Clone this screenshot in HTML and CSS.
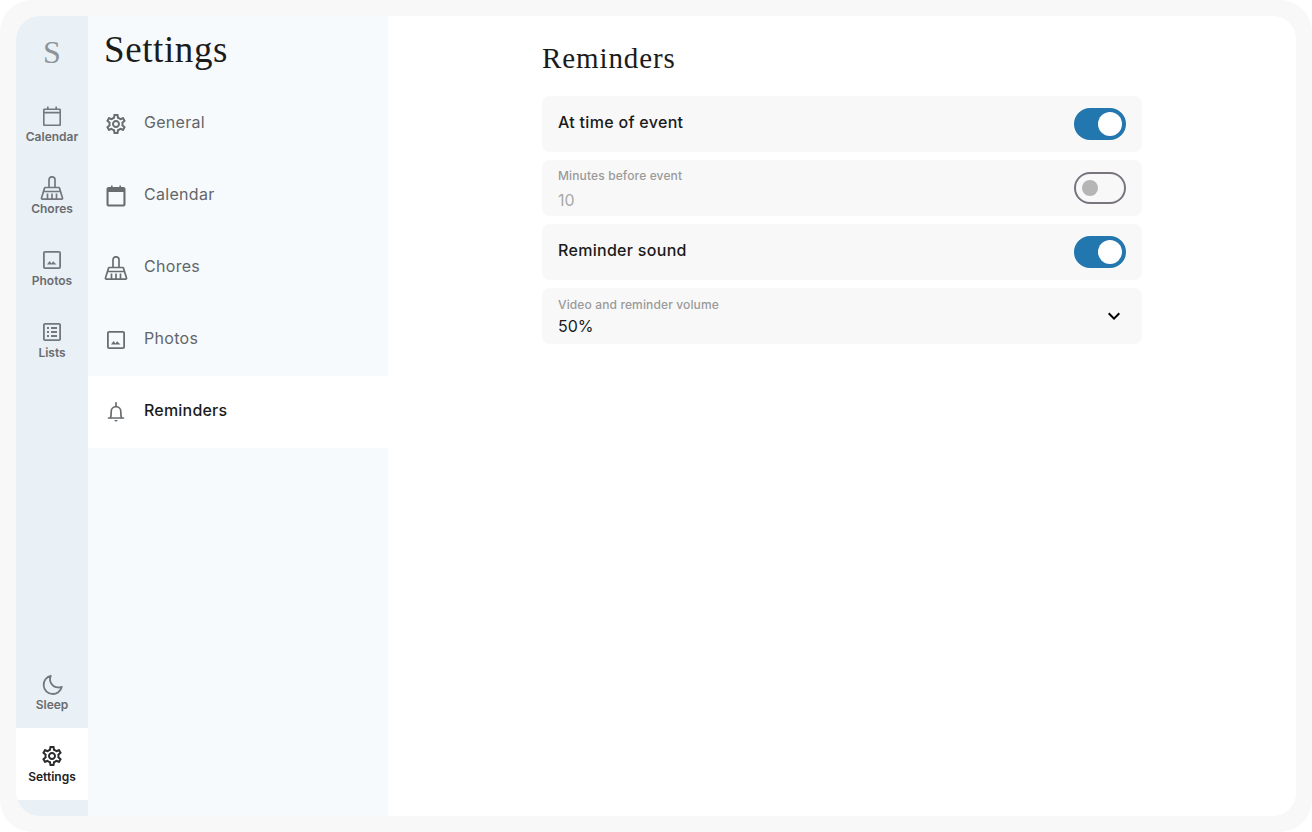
FILE: index.html
```html
<!DOCTYPE html>
<html lang="en">

<head>
    <meta charset="UTF-8">
    <title>Settings</title>
    <link rel="stylesheet" href="styles.css">
</head>

<body>
    <svg class="icon-defs" width="0" height="0">
        <symbol id="i-gear" viewBox="0 0 24 24">
            <path fill="currentColor" d="M19.43 12.98c.04-.32.07-.64.07-.98 0-.34-.03-.66-.07-.98l2.11-1.65c.19-.15.24-.42.12-.64l-2-3.46c-.09-.16-.26-.25-.44-.25-.06 0-.12.01-.17.03l-2.49 1c-.52-.4-1.08-.73-1.69-.98l-.38-2.65C14.46 2.18 14.25 2 14 2h-4c-.25 0-.46.18-.49.42l-.38 2.65c-.61.25-1.17.59-1.69.98l-2.49-1c-.06-.02-.12-.03-.18-.03-.17 0-.34.09-.43.25l-2 3.46c-.13.22-.07.49.12.64l2.11 1.65c-.04.32-.07.65-.07.98 0 .33.03.66.07.98l-2.11 1.65c-.19.15-.24.42-.12.64l2 3.46c.09.16.26.25.44.25.06 0 .12-.01.17-.03l2.49-1c.52.4 1.08.73 1.69.98l.38 2.65c.03.24.24.42.49.42h4c.25 0 .46-.18.49-.42l.38-2.65c.61-.25 1.17-.59 1.69-.98l2.49 1c.06.02.12.03.18.03.17 0 .34-.09.43-.25l2-3.46c.12-.22.07-.49-.12-.64l-2.11-1.65zm-1.98-1.71c.04.31.05.52.05.73 0 .21-.02.43-.05.73l-.14 1.13.89.7 1.08.84-.7 1.21-1.27-.51-1.04-.42-.9.68c-.43.32-.84.56-1.25.73l-1.06.43-.16 1.13-.2 1.35h-1.4l-.19-1.35-.16-1.13-1.06-.43c-.43-.18-.83-.41-1.23-.71l-.91-.7-1.06.43-1.27.51-.7-1.21 1.08-.84.89-.7-.14-1.13c-.03-.31-.05-.54-.05-.74s.02-.43.05-.73l.14-1.13-.89-.7-1.08-.84.7-1.21 1.27.51 1.04.42.9-.68c.43-.32.84-.56 1.25-.73l1.06-.43.16-1.13.2-1.35h1.39l.19 1.35.16 1.13 1.06.43c.43.18.83.41 1.23.71l.91.7 1.06-.43 1.27-.51.7 1.21-1.07.85-.89.7.14 1.13zM12 8c-2.21 0-4 1.79-4 4s1.79 4 4 4 4-1.79 4-4-1.79-4-4-4zm0 6c-1.1 0-2-.9-2-2s.9-2 2-2 2 .9 2 2-.9 2-2 2z" />
        </symbol>
        <symbol id="i-calendar" viewBox="0 0 24 24">
            <path fill="none" stroke="currentColor" stroke-width="1.6" d="M4.300 5.300h15.400a.5.5 0 0 1 .5.5v15a.5.5 0 0 1-.5.5H4.300a.5.5 0 0 1-.5-.5v-15a.5.5 0 0 1 .5-.5zM3.800 8.600h16.400M7.800 2.500v3M16.200 2.500v3" />
        </symbol>
        <symbol id="i-calendar-full" viewBox="0 0 24 24">
            <path fill="currentColor" d="M7 1.500h1.600V3h6.800V1.500H17V3h2.500c1.100 0 2 .9 2 2v15.500c0 1.100-.9 2-2 2h-15c-1.100 0-2-.9-2-2V5c0-1.100.9-2 2-2H7zM4.600 8v12.400h14.800V8z" />
        </symbol>
        <symbol id="i-broom" viewBox="0 0 24 24">
            <path fill="none" stroke="currentColor" stroke-width="1.7" stroke-linejoin="round" d="M9 11.500V3.800a3 3 0 0 1 6 0v7.700M5.500 11.500h13c.5 0 .9.3 1 .8l3 9.700c.2.6-.2 1.100-.8 1.100H2.300c-.6 0-1-.5-.8-1.100l3-9.700c.1-.5.5-.8 1-.8zM4 15.500h16M7.500 17.500v5M12 17.500v5M16.500 17.500v5" />
        </symbol>
        <symbol id="i-photo" viewBox="0 0 24 24">
            <path fill="currentColor" d="M5 3h14c1.100 0 2 .9 2 2v14c0 1.100-.9 2-2 2H5c-1.100 0-2-.9-2-2V5c0-1.100.9-2 2-2zm0 1.800c-.1 0-.2.1-.2.2v14c0 .1.1.2.2.2h14c.1 0 .2-.1.2-.2V5c0-.1-.1-.2-.2-.2zM7 16.500l2.600-3.600 1.900 2.500 1.500-2.100 3.500 3.200z" />
        </symbol>
        <symbol id="i-list" viewBox="0 0 24 24">
            <path fill="currentColor" d="M5 3h14c1.100 0 2 .9 2 2v14c0 1.100-.9 2-2 2H5c-1.100 0-2-.9-2-2V5c0-1.100.9-2 2-2zm0 1.800c-.1 0-.2.1-.2.2v14c0 .1.1.2.2.2h14c.1 0 .2-.1.2-.2V5c0-.1-.1-.2-.2-.2zM7 7h2v2H7zm4 0h6v2h-6zm-4 4h2v2H7zm4 0h6v2h-6zm-4 4h2v2H7zm4 0h6v2h-6z" />
        </symbol>
        <symbol id="i-bell" viewBox="0 0 24 24">
            <path fill="none" stroke="currentColor" stroke-width="1.7" stroke-linecap="round" stroke-linejoin="round" d="M4.500 18h15M6.500 18c.6-1.500.7-3.500.7-6.500a4.800 4.800 0 0 1 9.600 0c0 3 .1 5 .7 6.500M12 6.500V2.800" />
            <path fill="currentColor" d="M10.400 20h3.200a1.600 1.600 0 0 1-3.200 0z" />
        </symbol>
        <symbol id="i-moon" viewBox="0 0 24 24">
            <path fill="none" stroke="currentColor" stroke-width="1.800" stroke-linejoin="round" d="M10.800 3.800a9.200 9.200 0 1 0 11 11c-1.200.6-2.500.8-3.900.6a8.200 8.200 0 0 1-7.100-11.600z" />
        </symbol>
    </svg>

    <div class="frame">
        <nav class="rail">
            <div class="rail-logo">S</div>
            <a class="rail-item">
                <svg class="rail-icon"><use href="#i-calendar" /></svg>
                <span>Calendar</span>
            </a>
            <a class="rail-item">
                <svg class="rail-icon"><use href="#i-broom" /></svg>
                <span>Chores</span>
            </a>
            <a class="rail-item">
                <svg class="rail-icon"><use href="#i-photo" /></svg>
                <span>Photos</span>
            </a>
            <a class="rail-item">
                <svg class="rail-icon"><use href="#i-list" /></svg>
                <span>Lists</span>
            </a>
            <div class="rail-bottom">
                <a class="rail-item">
                    <svg class="rail-icon"><use href="#i-moon" /></svg>
                    <span>Sleep</span>
                </a>
                <a class="rail-item active">
                    <svg class="rail-icon"><use href="#i-gear" /></svg>
                    <span>Settings</span>
                </a>
            </div>
        </nav>

        <aside class="side">
            <h1>Settings</h1>
            <a class="side-item">
                <svg class="side-icon"><use href="#i-gear" /></svg>
                <span>General</span>
            </a>
            <a class="side-item">
                <svg class="side-icon"><use href="#i-calendar-full" /></svg>
                <span>Calendar</span>
            </a>
            <a class="side-item">
                <svg class="side-icon"><use href="#i-broom" /></svg>
                <span>Chores</span>
            </a>
            <a class="side-item">
                <svg class="side-icon"><use href="#i-photo" /></svg>
                <span>Photos</span>
            </a>
            <a class="side-item active">
                <svg class="side-icon"><use href="#i-bell" /></svg>
                <span>Reminders</span>
            </a>
        </aside>

        <main class="main">
            <div class="content">
                <h2>Reminders</h2>
                <div class="row">
                    <span class="row-label">At time of event</span>
                    <div class="toggle on"></div>
                </div>
                <div class="row disabled">
                    <div class="row-text">
                        <span class="row-small">Minutes before event</span>
                        <span class="row-value">10</span>
                    </div>
                    <div class="toggle"></div>
                </div>
                <div class="row">
                    <span class="row-label">Reminder sound</span>
                    <div class="toggle on"></div>
                </div>
                <div class="row">
                    <div class="row-text">
                        <span class="row-small">Video and reminder volume</span>
                        <span class="row-value">50%</span>
                    </div>
                    <svg class="chevron" viewBox="0 0 24 24">
                        <path d="M7.400 8.600 12 13.200l4.600-4.600L18 10l-6 6-6-6z" />
                    </svg>
                </div>
            </div>
        </main>
    </div>
</body>

</html>
```

FILE: styles.css
```css
* {
    box-sizing: border-box;
}

html {
    background-color: #ffffff;
}

body {
    margin: 0;
    height: 832px;
    padding: 16px;
    overflow: hidden;
    font-family: Inter, "Noto Sans", sans-serif;
    background-color: #f8f8f8;
    border-radius: 32px;
}

.icon-defs {
    position: absolute;
}

.frame {
    display: flex;
    height: 800px;
    border-radius: 24px;
    overflow: hidden;
    background-color: #ffffff;
}

/* left rail */
.rail {
    display: flex;
    flex-direction: column;
    flex: none;
    width: 72px;
    padding-bottom: 16px;
    background-color: #e9f0f6;
}

.rail-logo {
    display: flex;
    align-items: center;
    justify-content: center;
    height: 72px;
    font-family: "Liberation Serif", serif;
    font-size: 32px;
    color: #8e9397;
}

.rail-item {
    display: flex;
    flex-direction: column;
    align-items: center;
    height: 72px;
    padding-top: 16px;
    font-size: 12px;
    font-weight: 600;
    line-height: 14px;
    color: #696c70;
}

.rail-item.active {
    background-color: #ffffff;
    color: #1f2123;
}

.rail-icon {
    width: 24px;
    height: 24px;
    margin-bottom: 2px;
    color: #74787c;
}

.rail-item.active .rail-icon {
    color: #2a2c2e;
}

.rail-bottom {
    margin-top: auto;
}

/* settings list */
.side {
    flex: none;
    width: 300px;
    background-color: #f6fafd;
}

.side h1 {
    margin: 0;
    height: 72px;
    padding: 13px 0 0 16px;
    font-family: "Liberation Serif", serif;
    font-size: 37px;
    font-weight: 400;
    line-height: 42px;
    letter-spacing: 0.6px;
    color: #1b1b1b;
}

.side-item {
    display: flex;
    align-items: center;
    height: 72px;
    padding-left: 16px;
    font-size: 16px;
    font-weight: 400;
    letter-spacing: 0.3px;
    color: #636669;
}

.side-item span {
    margin-bottom: 4px;
}

.side-item.active {
    background-color: #ffffff;
    font-weight: 500;
    letter-spacing: 0.2px;
    color: #1b1b1b;
}

.side-icon {
    flex: none;
    width: 24px;
    height: 24px;
    margin-right: 16px;
    color: #6a6d70;
}

/* main content */
.main {
    flex: 1;
    display: flex;
    justify-content: center;
    background-color: #ffffff;
}

.content {
    width: 600px;
    padding-top: 25px;
}

.content h2 {
    margin: 0 0 21px;
    font-family: "Liberation Serif", serif;
    font-size: 29px;
    font-weight: 400;
    line-height: 34px;
    letter-spacing: 0.9px;
    color: #1b1b1b;
}

.row {
    display: flex;
    align-items: center;
    justify-content: space-between;
    height: 56px;
    margin-bottom: 8px;
    padding: 0 16px;
    border-radius: 8px;
    background-color: #f8f8f8;
}

.row-label {
    margin-bottom: 4px;
    font-size: 16px;
    font-weight: 500;
    letter-spacing: 0.3px;
    color: #1b1b1b;
}

.row-text {
    display: flex;
    flex-direction: column;
    align-self: flex-start;
    gap: 2px;
    padding-top: 9px;
}

.row-small {
    font-size: 12px;
    font-weight: 500;
    line-height: 16px;
    letter-spacing: 0.13px;
    color: #9a9a9a;
}

.row-value {
    font-size: 16px;
    line-height: 22px;
    color: #1b1b1b;
}

.disabled .row-text {
    gap: 5px;
    padding-top: 8px;
}

.disabled .row-value {
    color: #a8a8a8;
}

.toggle {
    position: relative;
    width: 52px;
    height: 32px;
    border: 2px solid #79747e;
    border-radius: 16px;
}

.toggle::after {
    content: "";
    position: absolute;
    left: 6px;
    top: 6px;
    width: 16px;
    height: 16px;
    border-radius: 50%;
    background-color: #b5b5b5;
}

.toggle.on {
    border-color: #2277ae;
    background-color: #2277ae;
}

.toggle.on::after {
    left: 22px;
    top: 2px;
    width: 24px;
    height: 24px;
    background-color: #ffffff;
}

.chevron {
    width: 24px;
    height: 24px;
    fill: #000000;
}
```
